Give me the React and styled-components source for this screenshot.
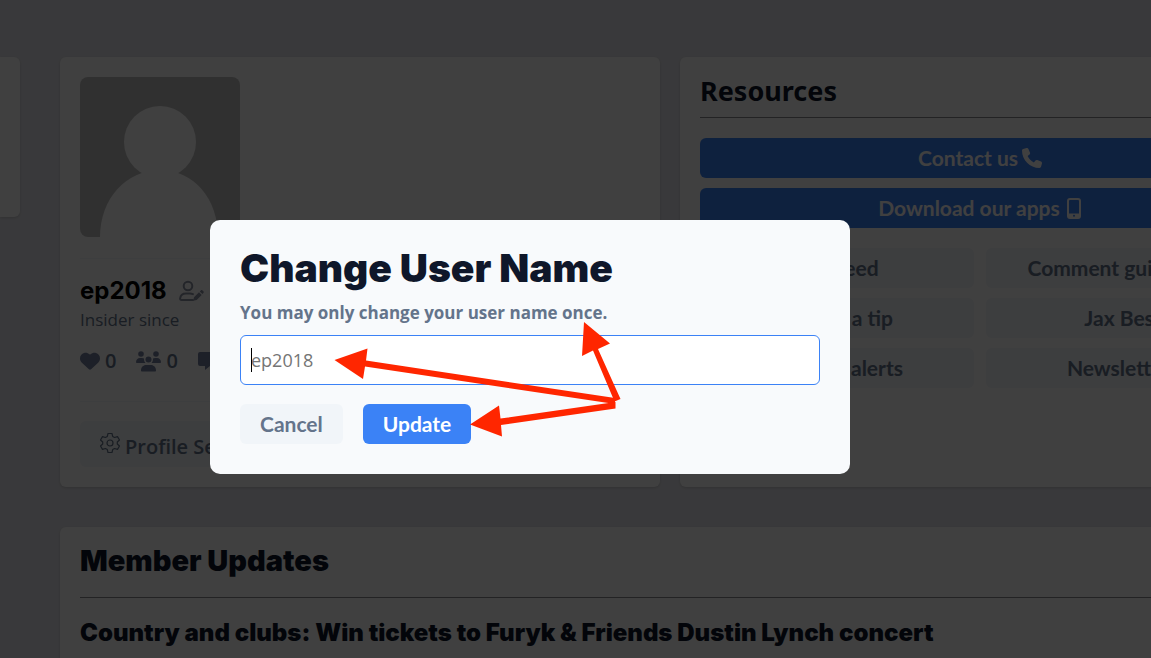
import React from "react";
import styled, { createGlobalStyle, css } from "styled-components";
import { FaHeart, FaPhone } from "react-icons/fa6";

const display = `Lato, "Open Sans", sans-serif`;
const black = `Inter, "Noto Sans", sans-serif`;
const text = `"Open Sans", "Noto Sans", sans-serif`;

const GlobalStyle = createGlobalStyle`
  *, *::before, *::after { box-sizing: border-box; }
  html { overflow: hidden; background: #e4e4ea; }
  body { margin: 0; font-family: ${text}; color: #0f172a; }
  h1, h2, h3, p, ul { margin: 0; padding: 0; }
`;

const Page = styled.div`
  display: flex;
  gap: 40px;
  height: 100vh;
  padding-top: 57px;
  overflow: hidden;
`;

const Card = styled.section`
  background: #fff;
  border-radius: 6px;
  padding: 20px;
  box-shadow: 0 1px 3px rgba(0, 0, 0, 0.15);
`;

const Sidebar = styled(Card)`
  flex: none;
  align-self: flex-start;
  width: 20px;
  height: 160px;
  padding: 0;
  border-radius: 0 6px 6px 0;
`;

const Main = styled.main`
  flex: 1 0 1220px;
  display: flex;
  flex-direction: column;
  gap: 40px;
`;

const Columns = styled.div`
  display: grid;
  grid-template-columns: 1fr 1fr;
  gap: 20px;
`;

const Avatar = styled.svg`
  display: block;
  width: 160px;
  height: 160px;
  border-radius: 8px;
`;

const Rule = styled.hr`
  height: 1px;
  margin: ${(p) => p.$margin || "0"};
  border: 0;
  background: ${(p) => (p.$dark ? "#8c8c90" : "#f1f5f9")};
`;

const NameRow = styled.div`
  display: flex;
  align-items: center;
  gap: 12px;
  height: 32px;
`;

const UserName = styled.h2`
  font: 700 24px/32px Inter, sans-serif;
  color: #000;
`;

const Since = styled.p`
  font-size: 17px;
  line-height: 26px;
  color: #64748b;
`;

const Stats = styled.ul`
  display: flex;
  gap: 20px;
  margin-top: 14px;
  list-style: none;
`;

const Stat = styled.li`
  display: flex;
  align-items: center;
  gap: 5px;
  font-size: 20px;
  font-weight: 600;
  line-height: 28px;
  color: #64748b;

  svg { color: #7480a0; }
`;

const Button = styled.button`
  display: flex;
  align-items: center;
  justify-content: center;
  gap: 4px;
  height: 40px;
  padding: 0 20px;
  border: 0;
  border-radius: 6px;
  font: 700 21px/28px ${display};
  background: #f1f5f9;
  color: #64748b;
  ${(p) => p.$primary && css`background: #3b82f6; color: #fff;`}
`;

const ProfileButton = styled(Button)`
  gap: 5px;
  height: 46px;
  padding-top: 6px;
  font: 600 20px/28px ${text};

  svg { margin-bottom: 8px; }
`;

const Heading = styled.h2`
  font: 700 27px/28px "Noto Sans", sans-serif;
`;

const BlackHeading = styled.h2`
  font: 900 29px/28px ${black};
`;

const ButtonStack = styled.div`
  display: grid;
  gap: 10px;
`;

const ButtonGrid = styled.div`
  display: grid;
  grid-template-columns: 1fr 1fr;
  gap: 10px 12px;
  margin-top: 20px;
`;

const Headline = styled.h3`
  font: 900 24px/30px ${black};
  white-space: nowrap;
`;

const Overlay = styled.div`
  position: fixed;
  inset: 0;
  display: flex;
  align-items: flex-start;
  justify-content: center;
  padding: 220px 91px 0 0;
  background: rgba(0, 0, 0, 0.75);
`;

const Dialog = styled.form`
  position: relative;
  width: 640px;
  padding: 28px 30px 30px;
  border-radius: 10px;
  background: #f8fafc;
`;

const Title = styled.h1`
  font: 900 39px/40px ${black};
`;

const Label = styled.label`
  display: block;
  margin: 11px 0 8px;
  font-size: 17px;
  font-weight: 700;
  line-height: 28px;
  color: #64748b;
`;

const Field = styled.div`
  position: relative;
`;

const Input = styled.input`
  display: block;
  width: 100%;
  height: 50px;
  padding: 0 10px;
  border: 1px solid #3b82f6;
  border-radius: 6px;
  outline: 0;
  background: #fff;
  font: 400 18px/28px ${text};
  &::placeholder { color: #757575; opacity: 1; }
`;

const Caret = styled.span`
  position: absolute;
  top: 13px;
  left: 11px;
  width: 1px;
  height: 24px;
  background: #000;
`;

const Actions = styled.div`
  display: flex;
  gap: 20px;
  margin-top: 19px;
`;

const Arrows = styled.svg`
  position: absolute;
  top: 90px;
  left: 110px;
  pointer-events: none;
`;

const UserEditIcon = () => (
  <svg width="25" height="22" viewBox="0 0 25 22" fill="none" stroke="#8d93a5" strokeWidth="2" aria-hidden="true">
    <circle cx="9" cy="6" r="4.3" />
    <path d="M14 20H2.4c-.8 0-1.400-.6-1.300-1.400C1.500 15.500 4 13.600 7 13.600h4c1 0 2 .2 2.900.6" strokeLinecap="round" />
    <path d="M14.200 20.800l.8-3.600 5-5 2.700 2.700-5 5zM20.800 11.400l1-1c.5-.5 1.200-.5 1.700 0l.9.9c.5.5.5 1.200 0 1.700l-1 1z" fill="#8d93a5" stroke="none" />
  </svg>
);

const GroupIcon = () => (
  <svg width="25" height="21" viewBox="0 0 25 21" fill="currentColor" aria-hidden="true">
    <circle cx="5" cy="3" r="2.800" />
    <circle cx="20" cy="3" r="2.800" />
    <circle cx="12.500" cy="8.500" r="3" />
    <path d="M0 11.200C0 8.700 1.600 7 4 7h2c.8 0 1.500.2 2.100.6-.2 1.800.2 3.200 1.400 4.400H.8c-.5 0-.8-.3-.8-.8zM25 11.200C25 8.700 23.400 7 21 7h-2c-.8 0-1.500.2-2.100.6.2 1.800-.2 3.200-1.400 4.400h8.700c.5 0 .8-.3.8-.8zM5 19.500c0-3.200 2.200-5.500 5-5.500h5c2.800 0 5 2.300 5 5.500 0 .6-.4 1-1 1H6c-.6 0-1-.4-1-1z" />
  </svg>
);

const CommentIcon = () => (
  <svg width="22" height="19" viewBox="0 0 22 19" fill="currentColor" aria-hidden="true">
    <path d="M2 0h18a2 2 0 0 1 2 2v10a2 2 0 0 1-2 2h-8l-5 4v-4H2a2 2 0 0 1-2-2V2a2 2 0 0 1 2-2z" />
  </svg>
);

const GearIcon = () => (
  <svg width="20" height="22" viewBox="0 0 20 22" fill="none" stroke="currentColor" strokeWidth="1.200" strokeLinejoin="round" aria-hidden="true">
    <circle cx="10" cy="11" r="3" />
    <path d="M8 1.500h4l.7 2.900 1.900 1.100 2.900-.9 2 3.400-2.200 2v2l2.200 2-2 3.400-2.900-.9-1.900 1.100-.7 2.900H8l-.7-2.900-1.900-1.100-2.900.9-2-3.400L2.700 12v-2L.5 8l2-3.400 2.900.9 1.900-1.100z" />
  </svg>
);

const MobileIcon = () => (
  <svg width="18" height="21" viewBox="-3 0 18 21" fill="none" stroke="currentColor" strokeWidth="2" aria-hidden="true">
    <rect x="1" y="1" width="12" height="19" rx="2" />
    <path d="M1 15.500h12v4H1z" fill="currentColor" stroke="none" />
    <circle cx="7" cy="17.700" r="1" fill="#3b82f6" stroke="none" />
  </svg>
);

const resources = ["RSS feed", "Comment guidelines", "Submit a tip", "Jax Best", "Manage alerts", "Newsletters"];

export default function App() {
  return (
    <>
      <GlobalStyle />
      <Page>
        <Sidebar as="aside" />
        <Main>
          <Columns>
            <Card>
              <Avatar viewBox="0 0 160 160" role="img" aria-label="Avatar">
                <rect width="160" height="160" fill="#c0c0c0" />
                <circle cx="80" cy="65" r="36" fill="#fff" />
                <path d="M20 160c0-38 26-67 60-67s58 29 58 67z" fill="#fff" />
              </Avatar>
              <Rule $margin="21px 0 16px" />
              <NameRow>
                <UserName>ep2018</UserName>
                <UserEditIcon />
              </NameRow>
              <Since>Insider since</Since>
              <Stats>
                <Stat><FaHeart size={20} />0</Stat>
                <Stat><GroupIcon />0</Stat>
                <Stat><CommentIcon />0</Stat>
              </Stats>
              <Rule $margin="26px 0 19px" />
              <ProfileButton type="button"><GearIcon />Profile Settings</ProfileButton>
            </Card>
            <Card>
              <Heading>Resources</Heading>
              <Rule $dark $margin="12px 0 20px" />
              <ButtonStack>
                <Button type="button" $primary>Contact us <FaPhone size={20} /></Button>
                <Button type="button" $primary>Download our apps <MobileIcon /></Button>
              </ButtonStack>
              <ButtonGrid>
                {resources.map((label) => <Button type="button" key={label}>{label}</Button>)}
              </ButtonGrid>
            </Card>
          </Columns>
          <Card>
            <BlackHeading>Member Updates</BlackHeading>
            <Rule $dark $margin="22px 0 20px" />
            <Headline>Country and clubs: Win tickets to Furyk &amp; Friends Dustin Lynch concert</Headline>
          </Card>
        </Main>
      </Page>
      <Overlay>
        <Dialog role="dialog" aria-labelledby="dialog-title" onSubmit={(e) => e.preventDefault()}>
          <Title id="dialog-title">Change User Name</Title>
          <Label htmlFor="user-name">You may only change your user name once.</Label>
          <Field>
            <Input id="user-name" type="text" placeholder="ep2018" />
            <Caret />
          </Field>
          <Actions>
            <Button type="button">Cancel</Button>
            <Button type="submit" $primary>Update</Button>
          </Actions>
          <Arrows width="310" height="140" viewBox="320 310 310 140" fill="#ff2600" aria-hidden="true">
            <path d="M334.500 360l33-11.500-1.500 12 249 37.500v6L365 366.500l-2 12.500z" />
            <path d="M584 322l26 21.500-12 5.500 22.500 50-6 2.500-21.500-51-11 5.500z" />
            <path d="M470 424.500l29-19 1.500 13L615.500 402v6.500L501 425l1 11.500z" />
          </Arrows>
        </Dialog>
      </Overlay>
    </>
  );
}
